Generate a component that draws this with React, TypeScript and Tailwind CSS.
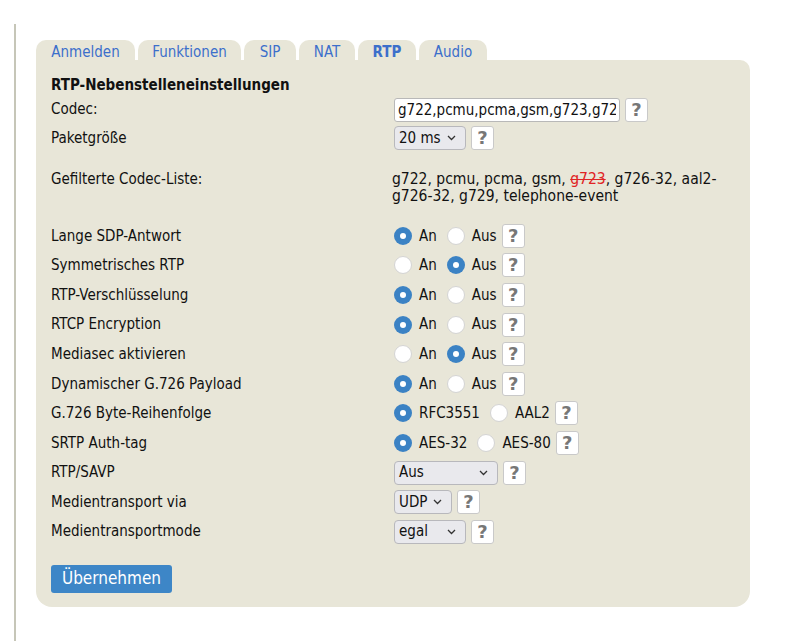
import React from "react";

const tabs = [
  { label: "Anmelden", w: "w-[99px]" },
  { label: "Funktionen", w: "w-[103px]" },
  { label: "SIP", w: "w-[52px]" },
  { label: "NAT", w: "w-[56px]" },
  { label: "RTP", w: "w-[58px]", active: true },
  { label: "Audio", w: "w-[68px]" },
];

function Help() {
  return (
    <span
      className="ml-[5px] inline-flex h-[24px] w-[23px] items-center justify-center rounded-[3px] border border-[#c9c9c9] bg-white text-[18px] font-bold leading-none text-[#777]"
      style={{ fontFamily: '"DejaVu Sans", sans-serif' }}
    >
      ?
    </span>
  );
}

function Radio({ checked, label, last }: { checked?: boolean; label: string; last?: boolean }) {
  return (
    <span className="inline-flex items-center">
      {checked ? (
        <span className="flex h-[18px] w-[18px] items-center justify-center rounded-full bg-[#3b82c4]">
          <span className="h-[6px] w-[6px] rounded-full bg-white"></span>
        </span>
      ) : (
        <span className="h-[18px] w-[18px] rounded-full border border-[#d4d4d4] bg-white"></span>
      )}
      <span className={`ml-[7px] ${last ? "" : "mr-[10px]"}`}>{label}</span>
    </span>
  );
}

function Select({ value, w }: { value: string; w: string }) {
  return (
    <span className={`inline-flex h-[24px] items-center justify-between rounded-[4px] border border-[#b8b8bc] bg-[#e9e9ed] pl-[4px] pr-[9px] ${w}`}>
      <span>{value}</span>
      <svg width="9" height="6" viewBox="0 0 9 6" fill="none">
        <path d="M1 1l3.5 3.5L8 1" stroke="#333" strokeWidth="1.3" />
      </svg>
    </span>
  );
}

type Row = { label: string; control: React.ReactNode };

const pair = (a: string, b: string, first: boolean) => (
  <>
    <Radio checked={first} label={a} />
    <Radio checked={!first} label={b} last />
  </>
);

const rows: Row[] = [
  { label: "Lange SDP-Antwort", control: pair("An", "Aus", true) },
  { label: "Symmetrisches RTP", control: pair("An", "Aus", false) },
  { label: "RTP-Verschlüsselung", control: pair("An", "Aus", true) },
  { label: "RTCP Encryption", control: pair("An", "Aus", true) },
  { label: "Mediasec aktivieren", control: pair("An", "Aus", false) },
  { label: "Dynamischer G.726 Payload", control: pair("An", "Aus", true) },
  { label: "G.726 Byte-Reihenfolge", control: pair("RFC3551", "AAL2", true) },
  { label: "SRTP Auth-tag", control: pair("AES-32", "AES-80", true) },
  { label: "RTP/SAVP", control: <Select value="Aus" w="w-[104px]" /> },
  { label: "Medientransport via", control: <Select value="UDP" w="w-[58px]" /> },
  { label: "Medientransportmode", control: <Select value="egal" w="w-[72px]" /> },
];

export default function App() {
  return (
    <div className="min-h-[641px] bg-white pt-[24px] text-[15px] text-[#111]" style={{ fontFamily: '"DejaVu Sans Condensed", "DejaVu Sans", sans-serif' }}>
      <div className="ml-[14px] min-h-[617px] border-l-2 border-[#c6c6b8] pl-[20px] pt-[16px]">
        <div className="w-[714px]">
          <div className="flex gap-[3px]">
            {tabs.map((t) => (
              <div
                key={t.label}
                className={`flex h-[20px] items-end justify-center rounded-t-[10px] bg-[#e8e6d8] text-[15px] leading-[16px] text-[#3c6fcb] ${t.w} ${t.active ? "font-bold" : ""}`}
              >
                {t.label}
              </div>
            ))}
          </div>
          <div className="rounded-b-[16px] rounded-tr-[10px] bg-[#e8e6d8] px-[15px] pb-[14px] pt-[15px]">
            <div className="flex h-[21px] items-center font-bold">RTP-Nebenstelleneinstellungen</div>
            <div className="grid grid-cols-[343px_1fr]">
              <div className="flex h-[27px] items-center">Codec:</div>
              <div className="flex h-[27px] items-center">
                <input
                  readOnly
                  value="g722,pcmu,pcma,gsm,g723,g726-32,aal2-g726-32,g729,telephone-event"
                  className="h-[24px] w-[226px] rounded-[3px] border border-[#b8b8b8] bg-white px-[3px] text-[15px] text-[#111] outline-none"
                />
                <Help />
              </div>
              <div className="flex h-[30px] items-center">Paketgröße</div>
              <div className="flex h-[30px] items-center">
                <Select value="20 ms" w="w-[72px]" />
                <Help />
              </div>
              <div className="pt-[18px] leading-[17px]">Gefilterte Codec-Liste:</div>
              <div className="-ml-[2px] pt-[18px] text-[15.5px] leading-[17px]">
                g722, pcmu, pcma, gsm, <span className="text-[#e02424] line-through">g723</span>, g726-32, aal2-
                <br />
                g726-32, g729, telephone-event
              </div>
              <div className="col-span-2 h-[16px]"></div>
              {rows.map((r) => (
                <React.Fragment key={r.label}>
                  <div className="flex h-[29.6px] items-center">{r.label}</div>
                  <div className="flex h-[29.6px] items-center">
                    {r.control}
                    <Help />
                  </div>
                </React.Fragment>
              ))}
            </div>
            <button className="mt-[18px] h-[28px] w-[121px] rounded-[3px] bg-[#3d86c7] text-[17px] text-white">
              Übernehmen
            </button>
          </div>
        </div>
      </div>
    </div>
  );
}
